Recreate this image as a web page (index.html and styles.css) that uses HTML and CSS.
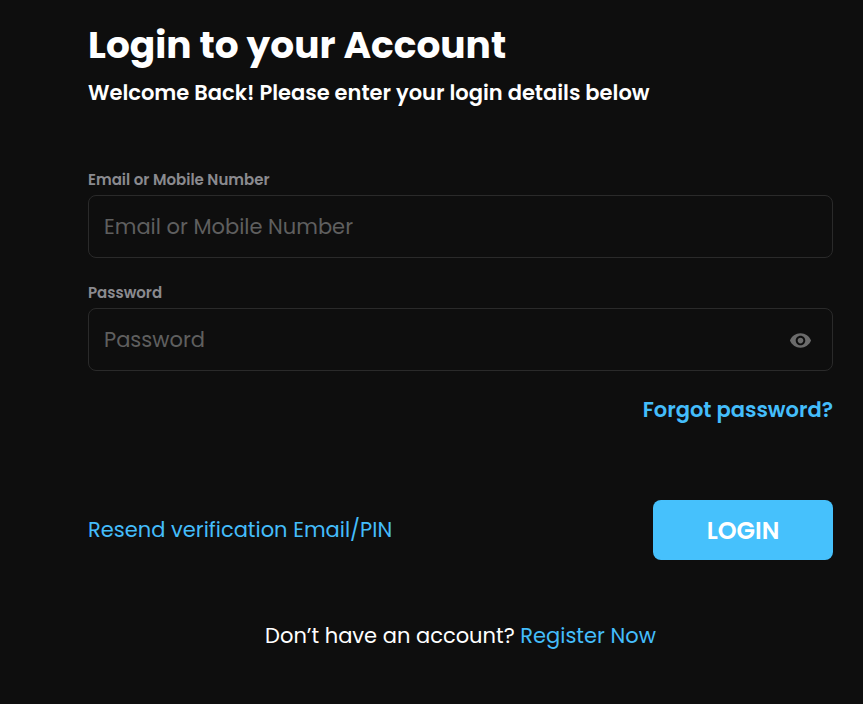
FILE: index.html
```html
<!DOCTYPE html>
<html lang="en">
<head>
<meta charset="utf-8">
<title>Login</title>
<link rel="stylesheet" href="styles.css">
</head>
<body>
<main class="page">
  <h1 class="title">Login to your Account</h1>
  <p class="subtitle">Welcome Back! Please enter your login details below</p>
  <form class="form">
    <div class="field">
      <label class="label">Email or Mobile Number</label>
      <div class="input"><span class="placeholder">Email or Mobile Number</span></div>
    </div>
    <div class="field">
      <label class="label">Password</label>
      <div class="input">
        <span class="placeholder">Password</span>
        <svg class="eye" viewBox="0 0 24 24" width="23" height="23"><path fill="#6b6b6b" d="M12 4.5C7 4.5 2.73 7.61 1 12c1.73 4.39 6 7.5 11 7.5s9.27-3.11 11-7.5c-1.73-4.39-6-7.5-11-7.5zM12 17c-2.76 0-5-2.24-5-5s2.24-5 5-5 5 2.24 5 5-2.24 5-5 5zm0-8c-1.66 0-3 1.34-3 3s1.34 3 3 3 3-1.34 3-3-1.34-3-3-3z"/></svg>
      </div>
    </div>
    <div class="forgot-row"><a class="forgot">Forgot password?</a></div>
    <div class="actions">
      <a class="resend">Resend verification Email/PIN</a>
      <button class="login" type="button">LOGIN</button>
    </div>
    <p class="register">Don’t have an account? <a class="link">Register Now</a></p>
  </form>
</main>
</body>
</html>
```
FILE: styles.css
```css
* { box-sizing: border-box; }
html, body { margin: 0; height: 100%; }
body { background: #0e0e0e; color: #fff; font-family: Poppins, "Open Sans", "Noto Sans", sans-serif; overflow: hidden; }
.page { padding: 20px 30px 0 88px; }
.title { margin: 0; font-size: 37.5px; line-height: 50px; font-weight: 700; }
.subtitle { margin: 8px 0 0; font-size: 21px; line-height: 30px; font-weight: 600; }
.form { margin-top: 62px; }
.field { margin-bottom: 25px; }
.label { display: block; font-size: 15px; line-height: 20px; font-weight: 600; color: #8a8a8f; margin-bottom: 5px; }
.input { height: 63px; border: 1px solid #2a2a2a; border-radius: 8px; display: flex; align-items: center; justify-content: space-between; padding: 0 20px 0 15px; }
.placeholder { font-size: 21px; color: #5f5f5f; }
.eye { display: block; margin-top: 2px; }
.forgot-row { display: flex; justify-content: flex-end; margin-top: -1px; }
.forgot { color: #44bdfb; font-size: 21px; font-weight: 600; line-height: 30px; }
.actions { display: flex; justify-content: space-between; align-items: center; margin-top: 75px; }
.resend { color: #44bdfb; font-size: 21px; margin-top: -2px; }
.login { width: 180px; height: 60px; border: 0; border-radius: 8px; background: #46c1fc; color: #fff; font: 600 24px Poppins, "Open Sans", "Noto Sans", sans-serif; }
.register { margin: 61px 0 0; text-align: center; font-size: 21px; line-height: 30px; }
.link { color: #44bdfb; }
```
